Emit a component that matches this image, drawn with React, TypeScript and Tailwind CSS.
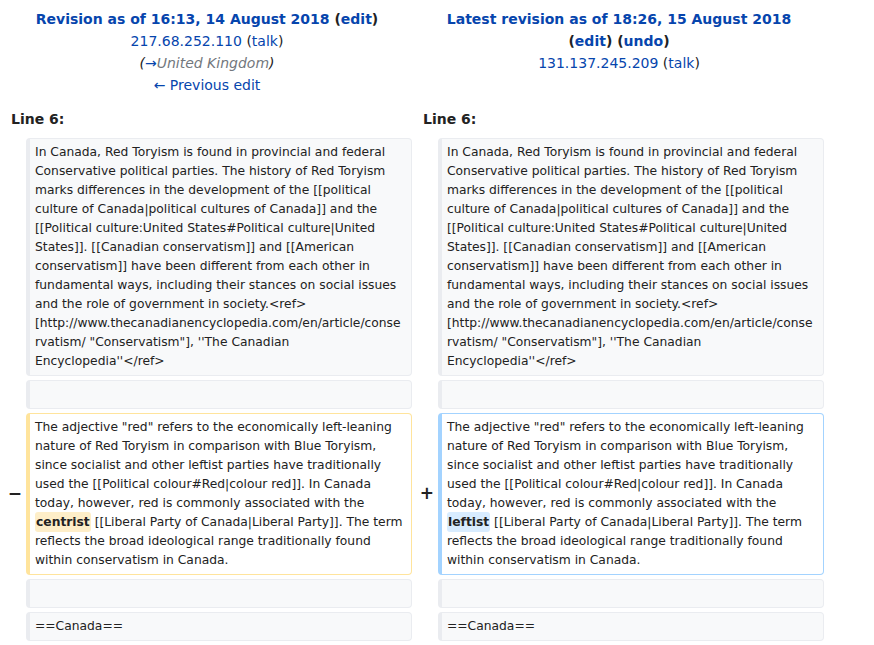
import React from "react";

const link = "text-[#0645ad]";

function Box({ kind, children }: { kind?: "del" | "add"; children?: React.ReactNode }) {
  const border =
    kind === "del"
      ? "border-[#ffe49c] bg-white"
      : kind === "add"
      ? "border-[#a3d3ff] bg-white"
      : "border-[#eaecf0] bg-[#f8f9fa]";
  return (
    <div
      className={`border border-l-[4px] rounded-[4px] ${border} px-[6px] pl-[5px] py-[4px] min-h-[29px] text-[12.3px] leading-[19px] text-[#222] break-words`}
    >
      {children}
    </div>
  );
}

function Marker({ sign }: { sign?: string }) {
  return (
    <div className="flex items-center justify-end pr-[4px] font-bold text-[17px] text-[#222]">
      {sign}
    </div>
  );
}

export default function App() {
  const context1 = (
    <>
      In Canada, Red Toryism is found in provincial and federal Conservative political parties. The history of Red Toryism marks differences in the development of the [[political culture of Canada|political cultures of Canada]] and the [[Political culture:United States#Political culture|United States]]. [[Canadian conservatism]] and [[American conservatism]] have been different from each other in fundamental ways, including their stances on social issues and the role of government in society.&lt;ref&gt;
      [http://www.thecanadianencyclopedia.com/en/article/conse
      rvatism/ "Conservatism"], ''The Canadian Encyclopedia''&lt;/ref&gt;
    </>
  );

  const changed = (word: string, bg: string) => (
    <>
      The adjective "red" refers to the economically left-leaning nature of Red Toryism in comparison with Blue Toryism, since socialist and other leftist parties have traditionally used the [[Political colour#Red|colour red]]. In Canada today, however, red is commonly associated with the{" "}
      <span className={`font-bold rounded-[3px] px-[1px] py-[3px] ${bg}`}>{word}</span> [[Liberal Party of Canada|Liberal Party]]. The term reflects the broad ideological range traditionally found within conservatism in Canada.
    </>
  );

  return (
    <div className="w-[874px] h-[645px] bg-white overflow-hidden" style={{ fontFamily: '"DejaVu Sans", sans-serif' }}>
      <div className="grid grid-cols-[26px_386px_26px_386px] gap-y-[4px]">
        {/* header */}
        <div className="col-span-2 text-center text-[14px] leading-[22px] text-[#222] pt-[8px] pl-[2px]">
          <div className="font-bold">
            <span className={link}>Revision as of 16:13, 14 August 2018</span> (<span className={link}>edit</span>)
          </div>
          <div>
            <span className={link}>217.68.252.110</span> (<span className={link}>talk</span>)
          </div>
          <div className="italic">
            (<span className={link}>→</span><span className="text-[#72777d]">United Kingdom</span>)
          </div>
          <div className={link}>← Previous edit</div>
        </div>
        <div className="col-span-2 text-center text-[14px] leading-[22px] text-[#222] pt-[8px] pl-[2px]">
          <div className="font-bold">
            <span className={link}>Latest revision as of 18:26, 15 August 2018</span>
          </div>
          <div className="font-bold">
            (<span className={link}>edit</span>) (<span className={link}>undo</span>)
          </div>
          <div>
            <span className={link}>131.137.245.209</span> (<span className={link}>talk</span>)
          </div>
        </div>

        {/* line numbers */}
        <div className="col-span-2 pl-[11px] mt-[8px] mb-[4px] font-bold text-[14px] leading-[22px] text-[#222]">Line 6:</div>
        <div className="col-span-2 pl-[11px] mt-[8px] mb-[4px] font-bold text-[14px] leading-[22px] text-[#222]">Line 6:</div>

        <Marker />
        <Box>{context1}</Box>
        <Marker />
        <Box>{context1}</Box>

        <Marker />
        <Box />
        <Marker />
        <Box />

        <Marker sign="−" />
        <Box kind="del">{changed("centrist", "bg-[#feeec8]")}</Box>
        <Marker sign="+" />
        <Box kind="add">{changed("leftist", "bg-[#d8ecff]")}</Box>

        <Marker />
        <Box />
        <Marker />
        <Box />

        <Marker />
        <Box>==Canada==</Box>
        <Marker />
        <Box>==Canada==</Box>
      </div>
    </div>
  );
}
